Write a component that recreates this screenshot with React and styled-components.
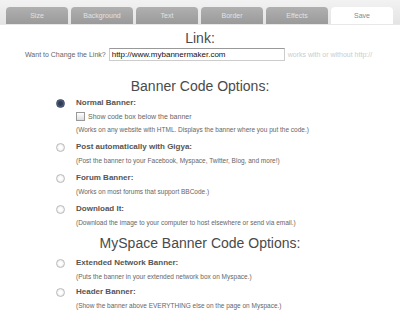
import React from 'react';
import styled, { createGlobalStyle } from 'styled-components';

const Global = createGlobalStyle`
  body {
    margin: 0;
    background: #fff;
    font-family: "Liberation Sans", Arial, sans-serif;
  }
`;

const tabs = ['Size', 'Background', 'Text', 'Border', 'Effects', 'Save'];

const options = [
  { title: 'Normal Banner:', desc: '(Works on any website with HTML. Displays the banner where you put the code.)', checked: true, extra: 'Show code box below the banner' },
  { title: 'Post automatically with Gigya:', desc: '(Post the banner to your Facebook, Myspace, Twitter, Blog, and more!)' },
  { title: 'Forum Banner:', desc: '(Works on most forums that support BBCode.)' },
  { title: 'Download It:', desc: '(Download the image to your computer to host elsewhere or send via email.)' },
];

const myspace = [
  { title: 'Extended Network Banner:', desc: '(Puts the banner in your extended network box on Myspace.)' },
  { title: 'Header Banner:', desc: '(Show the banner above EVERYTHING else on the page on Myspace.)' },
];

const App = () => {
  return (
    <Page>
      <Global />
      <TabBar>
        {tabs.map(t => (
          <Tab key={t} active={t === 'Save'}>{t}</Tab>
        ))}
      </TabBar>
      <Heading top={5}>Link:</Heading>
      <LinkRow>
        <LinkLabel>Want to Change the Link?</LinkLabel>
        <LinkInput>http://www.mybannermaker.com</LinkInput>
        <Hint>works with or without http://</Hint>
      </LinkRow>
      <Heading top={17}>Banner Code Options:</Heading>
      <OptionList top={3} gap={8}>
        {options.map(o => (
          <Option key={o.title}>
            <Radio checked={o.checked} />
            <OptionBody>
              <OptionTitle>{o.title}</OptionTitle>
              {o.extra && (
                <CheckRow>
                  <Check />
                  <span>{o.extra}</span>
                </CheckRow>
              )}
              <OptionDesc>{o.desc}</OptionDesc>
            </OptionBody>
          </Option>
        ))}
      </OptionList>
      <Heading top={8}>MySpace Banner Code Options:</Heading>
      <OptionList top={6} gap={6}>
        {myspace.map(o => (
          <Option key={o.title}>
            <Radio />
            <OptionBody>
              <OptionTitle>{o.title}</OptionTitle>
              <OptionDesc>{o.desc}</OptionDesc>
            </OptionBody>
          </Option>
        ))}
      </OptionList>
    </Page>
  );
};

export default App;

const Page = styled.div`
  width: 400px;
  height: 310px;
  overflow: hidden;
  background: #fff;
`;

const TabBar = styled.div`
  display: flex;
  gap: 3px;
  height: 25px;
  padding: 0 6px;
  align-items: flex-end;
  background: linear-gradient(#f2f2f2, #e4e4e4);
  border-bottom: 1px solid #e8e8e8;
  box-sizing: border-box;
`;

const Tab = styled.div`
  width: 62px;
  height: 17px;
  border-radius: 4px 4px 0 0;
  background: ${p => (p.active ? '#fff' : 'linear-gradient(#b0b0b0, #9a9a9a)')};
  color: ${p => (p.active ? '#888' : '#e2e2e2')};
  font-size: 7px;
  display: flex;
  align-items: center;
  justify-content: center;
`;

const Heading = styled.div`
  text-align: center;
  font-size: 14px;
  color: #4a4a4a;
  margin-top: ${p => p.top}px;
  line-height: 17px;
`;

const LinkRow = styled.div`
  display: flex;
  align-items: center;
  margin-top: 1px;
  padding-left: 25px;
  height: 13px;
`;

const LinkLabel = styled.span`
  font-size: 7px;
  color: #666;
  margin-right: 3px;
`;

const LinkInput = styled.div`
  width: 172px;
  height: 11px;
  border-top: 1px solid #999;
  border-left: 1px solid #ccc;
  border-right: 1px solid #ccc;
  border-bottom: 1px solid #ccc;
  font-size: 8px;
  color: #111;
  line-height: 11px;
  padding-left: 2px;
`;

const Hint = styled.span`
  font-size: 7px;
  color: #ccc;
  margin-left: 3px;
`;

const OptionList = styled.div`
  display: flex;
  flex-direction: column;
  gap: ${p => p.gap}px;
  padding-left: 56px;
  margin-top: ${p => p.top}px;
`;

const Option = styled.div`
  display: flex;
  align-items: flex-start;
`;

const Radio = styled.span`
  width: 7px;
  height: 7px;
  border-radius: 50%;
  margin-top: 1px;
  margin-right: 11px;
  flex-shrink: 0;
  border: 1px solid ${p => (p.checked ? '#3b4d6b' : '#bbb')};
  background: ${p => (p.checked ? 'radial-gradient(circle, #2f3d55 40%, #8593ad 100%)' : 'radial-gradient(circle, #fff 30%, #ddd 100%)')};
`;

const OptionBody = styled.div`
  display: flex;
  flex-direction: column;
  gap: 4px;
`;

const OptionTitle = styled.div`
  font-size: 8px;
  font-weight: bold;
  color: #555;
  line-height: 10px;
`;

const CheckRow = styled.div`
  display: flex;
  align-items: center;
  gap: 3px;
  font-size: 7px;
  color: #666;
  line-height: 9px;
`;

const Check = styled.span`
  width: 7px;
  height: 7px;
  border: 1px solid #999;
  background: linear-gradient(#fff, #ddd);
`;

const OptionDesc = styled.div`
  font-size: 6.5px;
  color: #666;
  line-height: 9px;
`;
